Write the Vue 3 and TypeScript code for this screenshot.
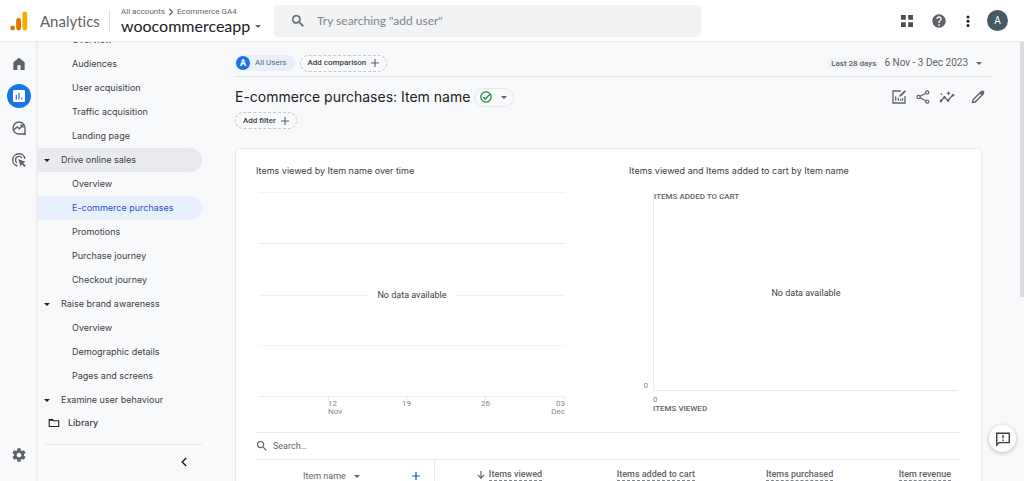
<script setup lang="ts">
interface NavItem {
  label: string
  group?: boolean
  active?: boolean
}

const navItems: NavItem[] = [
  { label: 'Overview' },
  { label: 'Audiences' },
  { label: 'User acquisition' },
  { label: 'Traffic acquisition' },
  { label: 'Landing page' },
  { label: 'Drive online sales', group: true },
  { label: 'Overview' },
  { label: 'E-commerce purchases', active: true },
  { label: 'Promotions' },
  { label: 'Purchase journey' },
  { label: 'Checkout journey' },
  { label: 'Raise brand awareness', group: true },
  { label: 'Overview' },
  { label: 'Demographic details' },
  { label: 'Pages and screens' },
  { label: 'Examine user behaviour', group: true },
]

const metrics = ['Items viewed', 'Items added to cart', 'Items purchased', 'Item revenue']

const ticks = [
  { day: '12', month: 'Nov', align: 'start' },
  { day: '19', month: '', align: 'center' },
  { day: '26', month: '', align: 'center' },
  { day: '03', month: 'Dec', align: 'end' },
]
</script>

<template>
  <div class="app">
    <header class="topbar">
      <div class="brand">
        <svg class="logo" viewBox="0 0 18 20" aria-hidden="true">
          <rect x="12.4" y="0.4" width="4.8" height="19" rx="2.4" fill="#f9ab00" />
          <rect x="6.2" y="7" width="4.8" height="12.4" rx="2.4" fill="#e37400" />
          <circle cx="2.6" cy="17" r="2.4" fill="#e37400" />
        </svg>
        <span class="product">Analytics</span>
      </div>
      <div class="account">
        <div class="crumbs">
          <a href="#">All accounts</a>
          <svg class="crumb-arrow" viewBox="0 0 6 8" aria-hidden="true"><path d="M1.3 .8 4.5 4 1.3 7.2" fill="none" stroke="#5f6368" stroke-width="1.3" /></svg>
          <a href="#">Ecommerce GA4</a>
        </div>
        <button type="button" class="property">woocommerceapp<span class="caret"></span></button>
      </div>
      <label class="search">
        <svg class="i12" viewBox="3 3 18 18" aria-hidden="true"><path fill="#5f6368" stroke="#5f6368" stroke-width=".5" d="M15.500 14h-.79l-.28-.27A6.470 6.470 0 0 0 16 9.500 6.500 6.500 0 1 0 9.500 16c1.610 0 3.090-.59 4.230-1.570l.27.28v.79l5 4.990L20.490 19l-4.990-5zm-6 0C7.010 14 5 11.990 5 9.500S7.010 5 9.500 5 14 7.010 14 9.500 11.990 14 9.500 14z" /></svg>
        <input type="text" aria-label="Search Analytics" placeholder='Try searching "add user"' />
      </label>
      <div class="tools">
        <button type="button" aria-label="Apps">
          <svg class="i14" viewBox="0 0 14 14"><path fill="#4a4d51" d="M1 1h4.800v4.800H1zM8.200 1H13v4.800H8.200zM1 8.200h4.800V13H1zM8.200 8.200H13V13H8.200z" /></svg>
        </button>
        <button type="button" aria-label="Help">
          <svg class="i16" viewBox="0 0 24 24"><path fill="#5f6368" d="M12 2C6.480 2 2 6.480 2 12s4.480 10 10 10 10-4.480 10-10S17.520 2 12 2zm1 17h-2v-2h2v2zm2.070-7.750-.9.920C13.450 12.900 13 13.500 13 15h-2v-.5c0-1.100.45-2.100 1.170-2.830l1.240-1.260c.37-.36.59-.86.59-1.410 0-1.100-.9-2-2-2s-2 .9-2 2H8c0-2.210 1.790-4 4-4s4 1.790 4 4c0 .88-.36 1.680-.93 2.250z" /></svg>
        </button>
        <button type="button" class="more" aria-label="More">
          <svg class="i14" viewBox="0 0 14 14"><g fill="#202124"><circle cx="7" cy="3" r="1.500" /><circle cx="7" cy="7.300" r="1.500" /><circle cx="7" cy="11.600" r="1.500" /></g></svg>
        </button>
        <button type="button" class="avatar" aria-label="Account">A</button>
      </div>
    </header>

    <div class="body">
      <nav class="rail" aria-label="Sections">
        <a href="#" aria-label="Home"><svg class="i16" viewBox="0 0 24 24"><path fill="#5f6368" d="M3.500 21V9.200L12 2.800l8.500 6.400V21h-6.100v-7H9.600v7z" /></svg></a>
        <a href="#" class="current" aria-label="Reports"><svg class="i14" viewBox="0 0 14 14"><rect x="1" y="1" width="12" height="12" rx="1.200" fill="#fff" /><path d="M4.300 6v4.500M7 4v6.500M9.700 8.500v2" stroke="#1a73e8" stroke-width="1.200" /></svg></a>
        <a href="#" aria-label="Explore"><svg class="i16" viewBox="0 0 16 16"><path d="M14 14H8a6 6 0 1 1 6-6z" fill="none" stroke="#5f6368" stroke-width="1.400" stroke-linejoin="round" /><path d="M2.800 9.800 6.200 7l2.200 1.800 3.200-3.200M9.400 5.200h2.500v2.500" fill="none" stroke="#5f6368" stroke-width="1.400" /><path d="M14.700 14.700h-3l3-3z" fill="#5f6368" /></svg></a>
        <a href="#" aria-label="Advertising"><svg class="i16" viewBox="0 0 16 16"><path d="M6.500 14A6.200 6.200 0 1 1 14 6.800M6 10.800a3.500 3.500 0 1 1 5-4.600" fill="none" stroke="#5f6368" stroke-width="1.400" /><path fill="#5f6368" d="m7.300 7.300 7.300 2.500-2.500 1.200 2.700 2.700-1.400 1.300-2.600-2.700-1.200 2.400z" /></svg></a>
        <a href="#" class="settings" aria-label="Admin"><svg class="i16" viewBox="0 0 24 24"><path fill="#5f6368" d="M19.430 12.980c.04-.32.07-.64.07-.98s-.03-.66-.07-.98l2.110-1.650c.19-.15.24-.42.12-.64l-2-3.460c-.12-.22-.39-.3-.61-.22l-2.490 1c-.52-.4-1.080-.73-1.690-.98l-.38-2.650C14.460 2.180 14.250 2 14 2h-4c-.25 0-.46.18-.49.42l-.38 2.650c-.61.25-1.170.59-1.690.98l-2.490-1c-.23-.09-.49 0-.61.22l-2 3.460c-.13.22-.07.49.12.64l2.110 1.650c-.04.32-.07.65-.07.98s.03.66.07.98l-2.110 1.650c-.19.15-.24.42-.12.64l2 3.460c.12.22.39.3.61.22l2.490-1c.52.4 1.080.73 1.690.98l.38 2.650c.03.24.24.42.49.42h4c.25 0 .46-.18.49-.42l.38-2.650c.61-.25 1.170-.59 1.690-.98l2.490 1c.23.09.49 0 .61-.22l2-3.460c.12-.22.07-.49-.12-.64l-2.110-1.650zM12 15.500c-1.930 0-3.500-1.570-3.500-3.500s1.570-3.500 3.500-3.500 3.500 1.570 3.500 3.500-1.570 3.500-3.500 3.500z" /></svg></a>
      </nav>

      <nav class="side" aria-label="Reports">
        <ul class="side-list">
          <li v-for="(item, i) in navItems" :key="i">
            <a href="#" :class="['side-link', { group: item.group, active: item.active, open: item.label === 'Drive online sales' }]">
              <span v-if="item.group" class="caret small"></span>{{ item.label }}
            </a>
          </li>
        </ul>
        <a href="#" class="library">
          <svg class="folder" viewBox="0 0 12 10" aria-hidden="true"><path d="M1.200 1.700h3.300l1 1.100h5.200v5.700H1.200z" fill="none" stroke="#202124" stroke-width="1.100" /><path d="M1 1h3.700l1.300 1.800H1z" fill="#202124" /></svg>
          Library
        </a>
        <div class="collapse">
          <button type="button" aria-label="Collapse menu"><svg class="chev" viewBox="0 0 8 10"><path d="M6.200 1 2.200 5l4 4" fill="none" stroke="#202124" stroke-width="1.500" /></svg></button>
        </div>
      </nav>

      <main class="main">
        <div class="filters">
          <button type="button" class="segment"><span class="badge">A</span>All Users</button>
          <button type="button" class="dashed">Add comparison<svg class="plus" viewBox="0 0 8 8"><path d="M4 0v8M0 4h8" stroke="#5f6368" stroke-width="1.100" /></svg></button>
          <button type="button" class="dates"><span class="preset">Last 28 days</span>6 Nov - 3 Dec 2023<span class="caret"></span></button>
        </div>

        <div class="heading">
          <h1>E-commerce purchases: Item name</h1>
          <button type="button" class="status" aria-label="Data quality">
            <svg class="check" viewBox="0 0 12 12"><circle cx="6" cy="6" r="5.200" fill="none" stroke="#188038" stroke-width="1.200" /><path d="m3.400 6.200 1.900 1.800L9.800 3.400" fill="none" stroke="#188038" stroke-width="1.300" /></svg>
            <span class="caret"></span>
          </button>
          <div class="actions">
            <button type="button" aria-label="Customise report"><svg class="i16" viewBox="0 0 16 16"><path d="M9.800 2H2v12h12V7" fill="none" stroke="#5f6368" stroke-width="1.300" /><path d="M4.700 7.200v4.600M7.300 8.800v3M9.500 10v1.800M11.500 9v2.800" stroke="#5f6368" stroke-width="1.200" /><path d="m8.300 7.700.3-1.500 5-5 1.300 1.300-5 5z" fill="#5f6368" /></svg></button>
            <button type="button" aria-label="Share"><svg class="i16" viewBox="0 0 16 16"><path d="M12.200 3.500 3.800 8l8.400 4.500" fill="none" stroke="#5f6368" stroke-width="1.200" /><g fill="#f8f9fa" stroke="#5f6368" stroke-width="1.200"><circle cx="12.200" cy="3.400" r="1.600" /><circle cx="3.600" cy="8" r="1.600" /><circle cx="12.200" cy="12.600" r="1.600" /></g></svg></button>
            <button type="button" aria-label="Insights"><svg class="i16" viewBox="0 0 16 16"><path d="m2 11.800 3.500-3.600 3.400 3.300 4.800-5.200" fill="none" stroke="#5f6368" stroke-width="1.300" /><g fill="#5f6368"><circle cx="2" cy="11.900" r="1.300" /><circle cx="5.500" cy="8.200" r="1.300" /><circle cx="9" cy="11.600" r="1.300" /><circle cx="14" cy="6.200" r="1.300" /><path d="m9.500 2 .7 1.600 1.600.7-1.600.7-.7 1.600-.7-1.600-1.600-.7 1.600-.7zM2.400 3.800l.4 1 1 .4-1 .4-.4 1-.4-1-1-.4 1-.4z" /></g></svg></button>
            <button type="button" class="edit" aria-label="Edit"><svg class="i16" viewBox="0 0 16 16"><path d="m2.600 13.400.4-2.600 7.900-7.900 2.200 2.200L5.200 13z" fill="none" stroke="#5f6368" stroke-width="1.400" /><path d="m9.400 4.300 2.500-2.500c.4-.4 1-.4 1.300 0l1 1c.4.400.4.900 0 1.300l-2.500 2.500z" fill="#5f6368" /></svg></button>
          </div>
        </div>
        <button type="button" class="dashed">Add filter<svg class="plus" viewBox="0 0 8 8"><path d="M4 0v8M0 4h8" stroke="#5f6368" stroke-width="1.100" /></svg></button>

        <section class="card">
          <div class="charts">
            <article>
              <h2>Items viewed by Item name over time</h2>
              <div class="timeline">
                <div class="gridlines">
                  <div class="band strong"></div>
                  <div class="band open-end"></div>
                  <div class="empty">No data available</div>
                  <div class="band"></div>
                  <div class="band last"></div>
                </div>
                <div class="axis">
                  <div v-for="t in ticks" :key="t.day" :class="['tick', t.align]">
                    <i></i><span>{{ t.day }}</span><span>{{ t.month }}</span>
                  </div>
                </div>
              </div>
            </article>
            <article>
              <h2>Items viewed and Items added to cart by Item name</h2>
              <div class="scatter">
                <span class="y-zero">0</span>
                <div class="plot">
                  <strong>ITEMS ADDED TO CART</strong>
                  <p>No data available</p>
                </div>
                <div class="x-axis"><span>0</span><strong>ITEMS VIEWED</strong></div>
              </div>
            </article>
          </div>
          <label class="table-search">
            <svg class="i10" viewBox="3 3 18 18" aria-hidden="true"><path fill="#5f6368" d="M15.500 14h-.79l-.28-.27A6.470 6.470 0 0 0 16 9.500 6.500 6.500 0 1 0 9.500 16c1.610 0 3.090-.59 4.230-1.570l.27.28v.79l5 4.990L20.490 19l-4.990-5zm-6 0C7.010 14 5 11.990 5 9.500S7.010 5 9.500 5 14 7.010 14 9.500 11.990 14 9.500 14z" /></svg>
            <input type="text" aria-label="Search table" placeholder="Search…" />
          </label>
          <table>
            <colgroup><col class="c-dim" /><col class="c-a" /><col class="c-b" /><col class="c-c" /><col class="c-a" /></colgroup>
            <thead>
              <tr>
                <th class="dim" scope="col">
                  <div>
                    <button type="button">Item name<span class="caret"></span></button>
                    <button type="button" class="add" aria-label="Add dimension"><svg class="plus" viewBox="0 0 8 8"><path d="M4 0v8M0 4h8" stroke="#1a56c8" stroke-width="1.200" /></svg></button>
                  </div>
                </th>
                <th v-for="(m, i) in metrics" :key="m" class="metric" scope="col">
                  <svg v-if="i === 0" class="sort" viewBox="0 0 8 8" aria-hidden="true"><path d="M4 0v7M.7 3.800 4 7.100l3.300-3.300" fill="none" stroke="#5f6368" stroke-width="1.200" /></svg><span>{{ m }}</span>
                </th>
              </tr>
            </thead>
          </table>
        </section>
      </main>
      <div class="scrollbar"></div>
    </div>
    <button type="button" class="feedback" aria-label="Send feedback">
      <svg class="i16" viewBox="0 0 16 16"><path d="M1.700 14V2.200h12.600v9.400H4z" fill="none" stroke="#3c4043" stroke-width="1.400" /><path d="M8 4v3.200M8 8.400v1.500" stroke="#3c4043" stroke-width="1.400" /></svg>
    </button>
  </div>
</template>

<style>
body { margin: 0; background: #f8f9fa; }
</style>

<style scoped>
.app {
  height: 100vh;
  display: flex;
  flex-direction: column;
  overflow: hidden;
  background: #f8f9fb;
  color: #3c4043;
  font: 9px/12px Roboto, "Liberation Sans", sans-serif;
}
.app * { box-sizing: border-box; }
button, input { font: inherit; color: inherit; border: 0; background: none; padding: 0; margin: 0; outline: 0; }
button { display: inline-flex; align-items: center; white-space: nowrap; cursor: pointer; }
a { color: inherit; text-decoration: none; }
svg { display: block; flex: none; }
h1, h2, p, ul { margin: 0; padding: 0; font-weight: 400; }
.i10 { width: 10px; height: 10px; }
.i12 { width: 12px; height: 12px; }
.i14 { width: 14px; height: 14px; }
.i16 { width: 16px; height: 16px; }
.plus { width: 8px; height: 8px; }
.caret { flex: none; border: 3px solid transparent; border-top-color: #5f6368; border-bottom: 0; }
.caret.small { border-top-color: #202124; }

.topbar { flex: none; height: 42px; display: flex; align-items: center; padding: 0 16px 0 10px; background: #fff; border-bottom: 1px solid #e8eaed; }
.brand { display: flex; align-items: center; gap: 12px; width: 100px; height: 22px; border-right: 1px solid #dadce0; }
.logo { width: 18px; height: 20px; }
.product { font: 15px/20px Lato, sans-serif; font-variant-ligatures: none; color: #5f6368; }
.account { width: 164px; padding-left: 11px; }
.crumbs { display: flex; align-items: center; gap: 3px; font-size: 8px; line-height: 12px; color: #5f6368; white-space: nowrap; }
.crumb-arrow { width: 6px; height: 8px; }
.property { gap: 5px; font: 16px/16px Lato, sans-serif; color: #202124; }
.search { flex: 1; max-width: 427px; height: 32px; display: flex; align-items: center; gap: 13px; padding: 0 18px; border-radius: 4px; background: #f1f3f4; }
.search input { flex: 1; min-width: 0; font: 12px/16px Lato, sans-serif; }
.search input::placeholder { color: #80868b; opacity: 1; }
.tools { display: flex; align-items: center; gap: 17px; margin-left: auto; }
.more { margin: 0 -5px 0 -3px; }
.avatar { width: 21px; height: 21px; border-radius: 50%; justify-content: center; background: #455a64; color: #fff; font-size: 10px; }

.body { flex: 1; min-height: 0; display: flex; }
.rail { width: 38px; display: flex; flex-direction: column; align-items: center; gap: 8px; padding: 10px 0 14px 1px; border-right: 2px solid #eceef0; }
.rail a { width: 24px; height: 24px; display: grid; place-items: center; border-radius: 50%; }
.rail .current { background: #1a73e8; }
.rail .settings { margin-top: auto; }

.side { width: 197px; overflow: hidden; font: 500 9px/24px Inter, sans-serif; color: #3c4043; }
.side-list { list-style: none; margin-top: -14px; margin-right: 33px; }
.side-link { display: block; height: 24px; padding-left: 34px; border-radius: 0 12px 12px 0; white-space: nowrap; }
.side-link.group { display: flex; align-items: center; gap: 11px; padding-left: 6px; }
.side-link.open { background: #e8eaed; }
.side-link.active { background: #e8f0fe; color: #1a56c8; }
.library { display: flex; align-items: center; gap: 8px; padding-left: 10px; height: 22px; }
.folder { width: 12px; height: 10px; }
.collapse { margin: 10px 33px 0 7px; padding: 7px 14px 0 0; border-top: 1px solid #e4e7ea; text-align: right; }
.chev { width: 8px; height: 10px; }

.main { flex: 1; min-width: 0; padding: 13px 31px 0 0; }
.filters { display: flex; align-items: center; gap: 5px; height: 22px; padding-bottom: 5px; border-bottom: 1px solid #dfe2e5; font-size: 8px; }
.segment { gap: 5px; height: 16px; padding: 0 8px 0 1px; border-radius: 8px; background: #e8f0fe; color: #5f6368; }
.badge { width: 14px; height: 14px; border-radius: 50%; background: #1a73e8; color: #fff; font-size: 9px; font-weight: 700; line-height: 14px; }
.dashed { gap: 5px; height: 17px; padding: 0 7px; border: 1px dashed #c4c7cb; border-radius: 9px; color: #3c4043; font-size: 8px; font-weight: 500; }
.dates { gap: 5px; margin-left: auto; padding-right: 11px; font: 10px/12px Roboto, sans-serif; color: #5f6368; }
.preset { padding: 0 3px; background: #f1f3f4; font-size: 8px; font-weight: 500; line-height: 11px; }
.dates .caret { margin-left: 3px; }
.heading { display: flex; align-items: center; height: 30px; margin-top: 5px; }
h1 { font: 14px/20px Inter, sans-serif; color: #202124; white-space: nowrap; }
.status { gap: 9px; height: 19px; margin-left: 4px; padding: 0 6px 0 5px; border: 1px solid #e4e7ea; border-radius: 10px; }
.check { width: 12px; height: 12px; }
.actions { display: flex; gap: 8px; margin-left: auto; padding-right: 7px; }
.edit { margin-left: 7px; }

.card { margin: 19px 11px 0 0; padding: 15px 20px 0; border: 1px solid #e8eaed; border-radius: 5px; background: #fff; }
.charts { display: grid; grid-template-columns: 1fr 1fr; gap: 41px; height: 268px; }
h2 { font: 9px/14px Inter, sans-serif; white-space: nowrap; }
.timeline { padding: 14px 23px 0 3px; }
.gridlines { border-top: 1px solid #f3f4f5; }
.band { height: 51px; border-bottom: 1px solid #f3f4f5; }
.band.strong { border-color: #e8eaed; }
.band.last { border-color: #eceef0; }
.band.open-end { border-bottom: 0; }
.empty { display: flex; align-items: center; gap: 7px; margin: -7px 0; font-size: 9px; line-height: 14px; }
.empty::before, .empty::after { content: ""; flex: 1; height: 1px; background: #f0f1f3; }
.axis { display: grid; grid-template-columns: 69fr 39fr 79fr 79fr 40fr; font-size: 8px; line-height: 8px; color: #80868b; }
.tick { display: flex; flex-direction: column; align-items: flex-start; }
.tick.start { grid-column: 2; }
.tick.center { align-items: center; }
.tick.end { align-items: flex-end; }
.tick i { width: 1px; height: 3px; background: #e4e7ea; }
.scatter { display: grid; grid-template-columns: 24px 1fr; padding: 14px 3px 0 0; color: #5f6368; font-size: 8px; line-height: 9px; }
.y-zero { align-self: end; text-align: right; padding: 0 5px 1px 0; color: #80868b; }
.plot { height: 199px; border-left: 1px solid #e8eaed; border-bottom: 1px solid #e8eaed; }
.plot strong, .x-axis strong { display: block; font-weight: 500; }
.plot p { padding-top: 85px; text-align: center; font-size: 9px; line-height: 14px; color: #3c4043; }
.x-axis { grid-column: 2; padding-top: 4px; }
.x-axis span { color: #80868b; }
.table-search { display: flex; align-items: center; gap: 6px; height: 28px; padding-left: 1px; border-top: 1px solid #e8eaed; border-bottom: 1px solid #e8eaed; }
.table-search input { flex: 1; min-width: 0; }
.table-search input::placeholder { color: #5f6368; opacity: 1; }
table { width: 100%; border-collapse: collapse; table-layout: fixed; }
.c-dim { width: 25.3%; }
.c-a { width: 16.7%; }
.c-b { width: 21.7%; }
.c-c { width: 19.6%; }
th { height: 40px; padding: 8px 10px 0; vertical-align: top; text-align: right; font-weight: 500; line-height: 12px; color: #5f6368; white-space: nowrap; }
.dim { padding-top: 9px; border-right: 1px solid #e8eaed; }
.dim div { display: flex; justify-content: space-between; height: 14px; padding: 0 4px 0 37px; font-weight: 400; }
.dim button { gap: 8px; }
.metric span { display: inline-block; border-bottom: 1px dashed #80868b; }
.sort { display: inline-block; width: 8px; height: 8px; margin-right: 4px; vertical-align: middle; }
.scrollbar { position: fixed; top: 42px; right: 0; width: 4px; height: 53vh; background: #dadce0; }
.feedback { position: fixed; right: 8px; bottom: 29px; width: 27px; height: 27px; justify-content: center; border-radius: 50%; background: #fff; box-shadow: 0 1px 4px #0004; }
</style>
